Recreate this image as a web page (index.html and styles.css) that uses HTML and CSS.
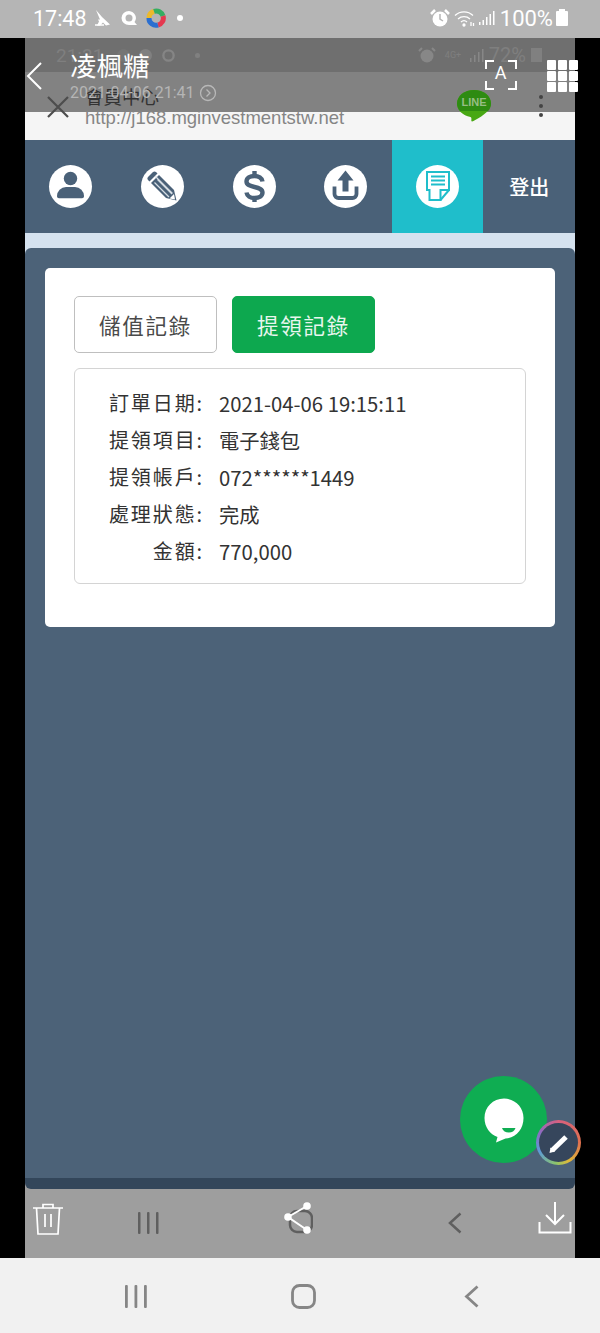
FILE: index.html
```html
<!DOCTYPE html>
<html lang="zh-Hant">
<head>
<meta charset="utf-8">
<title>提領記錄</title>
<link rel="stylesheet" href="styles.css">
</head>
<body>
<div class="phone">
  <header class="status">
    <div class="status-left">
      <span class="clock">17:48</span>
      <svg class="st-icon" width="18" height="18" viewBox="0 0 18 18"><path d="M2 1l6 7 8 7.500-4 1-3-3-3 3H3l2-4-1-2 2 0z" fill="#fff"/><path d="M1 16h9" stroke="#fff" stroke-width="1.500"/></svg>
      <svg class="st-icon" width="20" height="18" viewBox="0 0 20 18"><path d="M10 2a7.500 7 0 1 0 0 14h8l-2.500-3A7.500 7 0 0 0 10 2z" fill="#fff"/><circle cx="10" cy="9" r="3.500" fill="#b5b5b5"/></svg>
      <svg class="st-icon" width="20" height="20" viewBox="0 0 20 20" fill="none" stroke-width="5"><path d="M3 10a7 7 0 0 1 5-6.700" stroke="#ecb92c"/><path d="M8 3.300A7 7 0 0 1 17 8" stroke="#35ad62"/><path d="M17 8a7 7 0 0 1-5 9" stroke="#e5384f"/><path d="M12 17a7 7 0 0 1-9-7" stroke="#2b6fd0"/></svg>
      <span class="dot"></span>
    </div>
    <div class="status-right">
      <svg width="20" height="20" viewBox="0 0 20 20"><circle cx="10" cy="11" r="7.500" fill="#fff"/><path d="M10 6v5l3 2" stroke="#b5b5b5" stroke-width="1.500" fill="none"/><path d="M1 6l4-4M19 6l-4-4" stroke="#fff" stroke-width="2.500"/></svg>
      <svg width="22" height="18" viewBox="0 0 22 18" fill="none" stroke="#fff" stroke-width="1.300"><path d="M1 6.500a13 13 0 0 1 18 0M4 10a9 9 0 0 1 12 0M7 13a4.500 4.500 0 0 1 6 0"/><circle cx="10" cy="16" r="1" fill="#fff"/><path d="M17 13v4M19.500 14l0 3"/></svg>
      <svg width="17" height="16" viewBox="0 0 17 16" fill="#fff"><rect x="0" y="12" width="1.500" height="3"/><rect x="3.500" y="10" width="1.500" height="5"/><rect x="7" y="7" width="1.500" height="8"/><rect x="10.500" y="4" width="1.500" height="11"/><rect x="14" y="1" width="1.500" height="14"/></svg>
      <span class="battery-text">100%</span>
      <span class="battery"></span>
    </div>
  </header>

  <main class="stage">
    <div class="screen">
      <div class="ghost-status">
        <div class="ghost-left">
          <span>21:31</span>
          <i class="ghost-dot big faint"></i><i class="ghost-dot big"></i>
          <svg width="15" height="15" viewBox="0 0 16 16" fill="none" stroke="#858585" stroke-width="2.500"><circle cx="8" cy="8" r="5.500"/></svg>
          <i class="ghost-dot"></i>
        </div>
        <div class="ghost-right">
          <svg width="18" height="18" viewBox="0 0 18 18"><circle cx="9" cy="10" r="6.500" fill="#878787"/><path d="M1 5l3-3M17 5l-3-3" stroke="#878787" stroke-width="2"/></svg>
          <span class="ghost-net">4G+</span>
          <svg width="15" height="16" viewBox="0 0 15 16" fill="#878787"><rect y="11" width="1.500" height="4"/><rect x="4" y="8" width="1.500" height="7"/><rect x="8" y="5" width="1.500" height="10"/><rect x="12" y="2" width="1.500" height="13"/></svg>
          <span class="ghost-pct">72%</span>
          <span class="ghost-battery"></span>
        </div>
      </div>

      <div class="browser-bar">
        <svg class="close" width="24" height="24" viewBox="0 0 24 24" stroke="#4d4d4d" stroke-width="2.200"><path d="M2 2l20 20M22 2L2 22"/></svg>
        <div class="browser-text">
          <div class="page-title">會員中心</div>
          <div class="page-url">http://j168.mginvestmentstw.net</div>
        </div>
        <div class="line-logo">
          <svg width="34" height="33" viewBox="0 0 34 33"><path d="M17 0C7.600 0 0 5.800 0 13.500c0 6.800 5.700 12 13.500 13.500 1 .3 1 1.500.8 3.500 0 1.200 1 1.200 2.200.5 5-3 17.500-9 17.500-17.500C34 5.800 26.400 0 17 0z" fill="#48a814"/><path d="M17 0C7.600 0 0 5.800 0 13.500 0 16.400 1 19 3 21h28c2-2 3-4.600 3-7.500C34 5.800 26.400 0 17 0z" fill="#2e8b12"/></svg>
          <span class="line-text">LINE</span>
        </div>
        <div class="kebab"><i></i><i></i><i></i></div>
      </div>

      <div class="viewer-top">
        <svg class="back" width="16" height="28" viewBox="0 0 16 28" fill="none" stroke="#fff" stroke-width="2"><path d="M15 1L2 14l13 13"/></svg>
        <div class="viewer-text">
          <div class="sender">凌楓糖</div>
          <div class="sent-at">2021-04-06 21:41
            <svg width="18" height="18" viewBox="0 0 18 18" fill="none" stroke="#b8b8b8" stroke-width="1.300"><circle cx="9" cy="9" r="7.500"/><path d="M7.500 5.500L11 9l-3.500 3.500"/></svg>
          </div>
        </div>
        <div class="scan"><svg width="32" height="30" viewBox="0 0 32 30" fill="none" stroke="#fff" stroke-width="2"><path d="M1 9V1h8M23 1h8v8M31 21v8h-8M9 29H1v-8"/></svg><span>A</span></div>
        <div class="apps"><i></i><i></i><i></i><i></i><i></i><i></i><i></i><i></i><i></i></div>
      </div>

      <nav class="tabs">
        <a class="tab"><span class="disc"><svg width="43" height="43" viewBox="0 0 43 43" fill="#4a6178"><circle cx="21.500" cy="13.500" r="6.700"/><path d="M8 31a9 9 0 0 1 9-9h9a9 9 0 0 1 9 9c0 1.500-.8 2.200-2 2.200H10c-1.200 0-2-.7-2-2.200z"/></svg></span></a>
        <a class="tab"><span class="disc"><svg width="43" height="43" viewBox="0 0 43 43"><path d="M7 12l5-5c1-.8 2-.8 3 0l1.500 1.500-8 8L7 15c-.8-1-.8-2 0-3z" fill="#4a6178"/><path d="M10 18l8-8 15 15 2.500 10.500L25 33z" fill="#4a6178"/><path d="M13.500 17.500L28 32M16.500 14.500L31 29M14.500 11.500l17 17" stroke="#d6dde4" stroke-width="1.300" fill="none"/><path d="M28.500 33.500l4.500-4.500 1 5.500z" fill="#fff"/></svg></span></a>
        <a class="tab"><span class="disc"><svg width="43" height="43" viewBox="0 0 43 43" fill="none" stroke="#4a6178"><path d="M29.500 16.500c-.5-3.500-4-5.500-8-5.500-4.500 0-8 2-8 5.500 0 3.500 3.500 4.500 8 5.500s8 2 8 5.500c0 3.500-3.500 5.500-8 5.500-4 0-7.500-2-8-5.500" stroke-width="4.400"/><path d="M21.500 6v6M21.500 31v6" stroke-width="4.400"/></svg></span></a>
        <a class="tab"><span class="disc"><svg width="43" height="43" viewBox="0 0 43 43" fill="#4a6178"><path d="M21.500 5.500l8 10h-5v11h-6v-11h-5z"/><path d="M10.500 21.500v7.500a4 4 0 0 0 4 4h14a4 4 0 0 0 4-4v-7.500" fill="none" stroke="#4a6178" stroke-width="3.800"/></svg></span></a>
        <a class="tab active"><span class="disc"><svg width="43" height="43" viewBox="0 0 43 43" fill="none" stroke="#1fbecb"><path d="M10.500 6.500h23v18.500L24 36H14V26h-3.500z" stroke-width="0"/><path d="M11 7h22v18H24.500v10H13.500V25H11z" stroke-width="2"/><path d="M24.500 35L33 25" stroke-width="2"/><path d="M15 11.500h14M15 15.500h14M15 19.500h14" stroke-width="2"/></svg></span></a>
        <a class="tab logout">登出</a>
      </nav>

      <div class="content">
        <section class="panel">
          <div class="card">
            <div class="buttons">
              <button class="btn">儲值記錄</button>
              <button class="btn primary">提領記錄</button>
            </div>
            <dl class="record">
              <div class="row"><dt>訂單日期:</dt><dd>2021-04-06 19:15:11</dd></div>
              <div class="row"><dt>提領項目:</dt><dd>電子錢包</dd></div>
              <div class="row"><dt>提領帳戶:</dt><dd>072******1449</dd></div>
              <div class="row"><dt>處理狀態:</dt><dd>完成</dd></div>
              <div class="row"><dt>金額:</dt><dd>770,000</dd></div>
            </dl>
          </div>
        </section>
      </div>

      <footer class="viewer-bottom">
        <svg width="32" height="34" viewBox="0 0 32 34" fill="none" stroke="#fff" stroke-width="1.700"><path d="M1 6h30M11 6V2.500h10V6M4.500 6l1.500 26h20l1.500-26M13 12v13M19 12v13"/></svg>
        <svg class="vb-bars" width="22" height="22" viewBox="0 0 22 22" fill="#5f5f5f"><rect x="1" width="2.500" height="22" rx="1"/><rect x="10" width="2.500" height="22" rx="1"/><rect x="19" width="2.500" height="22" rx="1"/></svg>
        <svg class="vb-share" width="32" height="34" viewBox="0 0 32 34"><rect x="9" y="9" width="22" height="21" rx="7" fill="none" stroke="#5f5f5f" stroke-width="2.500"/><path d="M26 4L7 15l19 13" fill="none" stroke="#fff" stroke-width="2"/><circle cx="26" cy="4" r="3.800" fill="#fff"/><circle cx="7" cy="15" r="3.800" fill="#fff"/><circle cx="26" cy="28" r="3.800" fill="#fff"/></svg>
        <svg class="vb-back" width="14" height="22" viewBox="0 0 14 22" fill="none" stroke="#5f5f5f" stroke-width="2.500"><path d="M12.500 1.500L2 11l10.500 9.500"/></svg>
        <svg class="vb-save" width="34" height="32" viewBox="0 0 34 32" fill="none" stroke="#fff" stroke-width="2"><path d="M17 0v21M8 13l9 9 9-9M1.500 20v10.500h31V20"/></svg>
      </footer>

      <button class="fab" aria-label="chat">
        <svg width="44" height="46" viewBox="0 0 44 46"><path d="M22 1.500C11 1.500 2.500 10 2.500 21c0 9 5.500 16.500 13 19L14 45.500l9.500-4C34 41 41.500 32 41.500 21 41.500 10 33 1.500 22 1.500z" fill="#fff"/><path d="M20 31h13.500c-1 3-3.500 4.500-6.700 4.500S21 34 20 31z" fill="#0fad52"/></svg>
      </button>
      <button class="edit-badge" aria-label="edit">
        <svg width="24" height="24" viewBox="0 0 24 24"><path d="M5 19.500L19 6" stroke="#fff" stroke-width="5" fill="none"/><path d="M2.500 22l1-5.500 4.500 4z" fill="#fff"/></svg>
      </button>
    </div>
  </main>

  <footer class="nav">
    <svg width="24" height="23" viewBox="0 0 24 23" fill="#868686"><rect x="1" width="2.800" height="23" rx="1"/><rect x="10.500" width="2.800" height="23" rx="1"/><rect x="20" width="2.800" height="23" rx="1"/></svg>
    <svg class="nav-home" width="25" height="25" viewBox="0 0 25 25" fill="none" stroke="#868686" stroke-width="2.800"><rect x="1.500" y="1.500" width="22" height="22" rx="7"/></svg>
    <svg class="nav-back" width="15" height="23" viewBox="0 0 15 23" fill="none" stroke="#868686" stroke-width="2.800"><path d="M13.500 1.500L2.500 11.500l11 10"/></svg>
  </footer>
</div>
</body>
</html>
```
FILE: styles.css
```css
* { box-sizing: border-box; }
html, body { margin: 0; padding: 0; }
body { width: 600px; height: 1333px; overflow: hidden; background: #000; font-family: "Noto Sans CJK TC", "Noto Sans", sans-serif; }
dl, dd, dt { margin: 0; }
button { font-family: inherit; border: 0; padding: 0; }

.phone { width: 600px; height: 1333px; display: flex; flex-direction: column; }

.status { height: 38px; flex: none; background: #b5b5b5; display: flex; justify-content: space-between; align-items: center; padding: 0 32px 2px 33px; color: #fff; font-family: "Roboto", sans-serif; }
.status-left, .status-right { display: flex; align-items: center; }
.clock { font-size: 21.500px; margin-right: 7px; }
.st-icon { margin-right: 7px; }
.dot { width: 6px; height: 6px; border-radius: 50%; background: #fff; margin-left: 4px; }
.status-right { gap: 3px; }
.status-right svg:first-child { margin-right: 1px; }
.battery-text { font-size: 22px; margin-left: 1px; }
.battery { width: 12px; height: 15px; background: #fff; border-radius: 1px; position: relative; margin-left: 0; }
.battery::before { content: ""; position: absolute; left: 3px; top: -2px; width: 6px; height: 2px; background: #fff; }

.stage { flex: 1; display: flex; justify-content: center; min-height: 0; }
.screen { width: 550px; position: relative; display: flex; flex-direction: column; }

.ghost-status { height: 34px; flex: none; background: #6f6f6f; display: flex; justify-content: space-between; align-items: center; padding: 0 33px 0 31px; color: #7f7f7f; font-family: "Roboto", sans-serif; }
.ghost-left, .ghost-right { display: flex; align-items: center; gap: 9px; }
.ghost-left span { font-size: 19px; margin-right: 5px; }
.ghost-dot { width: 5px; height: 5px; border-radius: 50%; background: #808080; margin-left: 10px; }
.ghost-dot.big { width: 13px; height: 13px; margin-left: 0; }
.ghost-dot.faint { background: #757575; }
.ghost-net { font-size: 9px; width: 16px; line-height: 9px; }
.ghost-pct { font-size: 20px; margin-left: -5px; }
.ghost-battery { width: 11px; height: 14px; background: #808080; margin-left: -4px; }

.browser-bar { height: 68px; flex: none; background: linear-gradient(#828282 0 40px, #f5f5f5 40px); display: flex; align-items: flex-start; padding: 0 32px 0 11px; }
.close { margin: 23px 15px 0 10px; flex: none; }
.browser-text { flex: 1; padding: 11px 0 0 0; }
.page-title { font-size: 18.500px; line-height: 26px; color: #333; }
.page-url { font-family: "Liberation Sans", sans-serif; font-size: 18.500px; line-height: 20px; color: #858585; margin-top: -1px; }
.line-logo { flex: none; position: relative; width: 34px; height: 33px; margin: 18px 48px 0 0; }
.line-logo svg { display: block; }
.line-text { position: absolute; left: 0; right: 0; top: 6px; text-align: center; font: bold 11px/13px "Liberation Sans", sans-serif; color: #96bd85; }
.kebab { display: flex; flex-direction: column; gap: 5px; margin-top: 23px; flex: none; }
.kebab i { width: 4px; height: 4px; border-radius: 50%; background: #444; }

.viewer-top { position: absolute; left: 0; top: 0; width: 553px; display: flex; align-items: flex-start; padding-top: 11px; }
.back { margin: 13px 0 0 1px; flex: none; }
.viewer-text { margin-left: 28px; flex: 1; }
.sender { font-size: 26.500px; line-height: 32px; color: #fff; }
.sent-at { font-family: "Roboto", sans-serif; font-size: 16px; line-height: 20px; color: #b5b5b5; margin-top: 2px; display: flex; align-items: center; gap: 4px; }
.scan { position: relative; width: 32px; height: 30px; margin: 11px 30px 0 0; flex: none; }
.scan svg { display: block; }
.scan span { position: absolute; left: 0; right: 0; top: 2px; text-align: center; color: #fff; font: 18px "Roboto", sans-serif; }
.apps { display: grid; grid-template-columns: repeat(3, 9.500px); gap: 1.500px; flex: none; margin-top: 11px; }
.apps i { height: 9.500px; background: #fff; border-radius: 1px; }

.tabs { height: 93px; flex: none; background: #4a6178; display: grid; grid-template-columns: repeat(6, 1fr); }
.tab { display: flex; align-items: center; justify-content: center; }
.tab.active { background: #1fbecb; }
.disc { width: 43px; height: 43px; border-radius: 50%; background: #fff; display: block; }
.disc svg { display: block; }
.logout { color: #fff; font-size: 20px; font-weight: 500; }

.content { flex: 1; min-height: 0; display: flex; padding-top: 15px; background: linear-gradient(#d5e2ef 50%, #9e9e9e 50%); }
.panel { flex: 1; padding: 20px 20px 0; background: #4c6278; border-bottom: 11px solid #33465a; border-radius: 6px; }
.card { height: 359px; background: #fff; border-radius: 5px; padding: 28px 29px; }
.buttons { display: flex; gap: 15px; }
.btn { width: 143px; height: 57px; background: #fff; border: 1px solid #bfbfbf; border-radius: 5px; color: #4a4a4a; font-size: 21.500px; letter-spacing: 1.700px; }
.btn.primary { background: #0da84f; border-color: #0da84f; color: #e8f6ee; }
.record { margin-top: 15px; height: 216px; width: 452px; border: 1px solid #d4d4d4; border-radius: 6px; padding: 15px 0 0 0; color: #333; }
.row { display: flex; height: 37px; align-items: center; font-size: 20px; }
.row dt { width: 129px; text-align: right; letter-spacing: 1.900px; flex: none; }
.row dd { margin-left: 15px; font-size: 20.300px; }

.viewer-bottom { flex: none; height: 69px; background: #9e9e9e; display: flex; align-items: flex-start; padding: 13px 0 0 7px; }
.viewer-bottom svg { display: block; flex: none; }
.vb-bars { margin: 10px 0 0 73px; }
.vb-share { margin-left: 122px; }
.vb-back { margin: 10px 0 0 135px; }
.vb-save { margin-left: 76px; }

.fab { position: absolute; left: 435px; top: 1038px; width: 87px; height: 87px; border-radius: 50%; background: #0fad52; display: flex; align-items: center; justify-content: center; }
.fab svg { display: block; }
.edit-badge { position: absolute; left: 511px; top: 1082px; width: 45px; height: 45px; border-radius: 50%; background: conic-gradient(#d8607f, #e0704f 25%, #dfb93a 42%, #8cc46a 52%, #5d9bd6 68%, #8a6cc4 82%, #d8607f); display: flex; align-items: center; justify-content: center; }
.edit-badge::before { content: ""; position: absolute; inset: 3px; border-radius: 50%; background: #36465c; }
.edit-badge svg { position: relative; }

.nav { height: 75px; flex: none; background: #f1f1f1; display: flex; align-items: center; padding: 2px 0 0 124px; }
.nav-home { margin-left: 143px; }
.nav-back { margin-left: 148px; }
```
